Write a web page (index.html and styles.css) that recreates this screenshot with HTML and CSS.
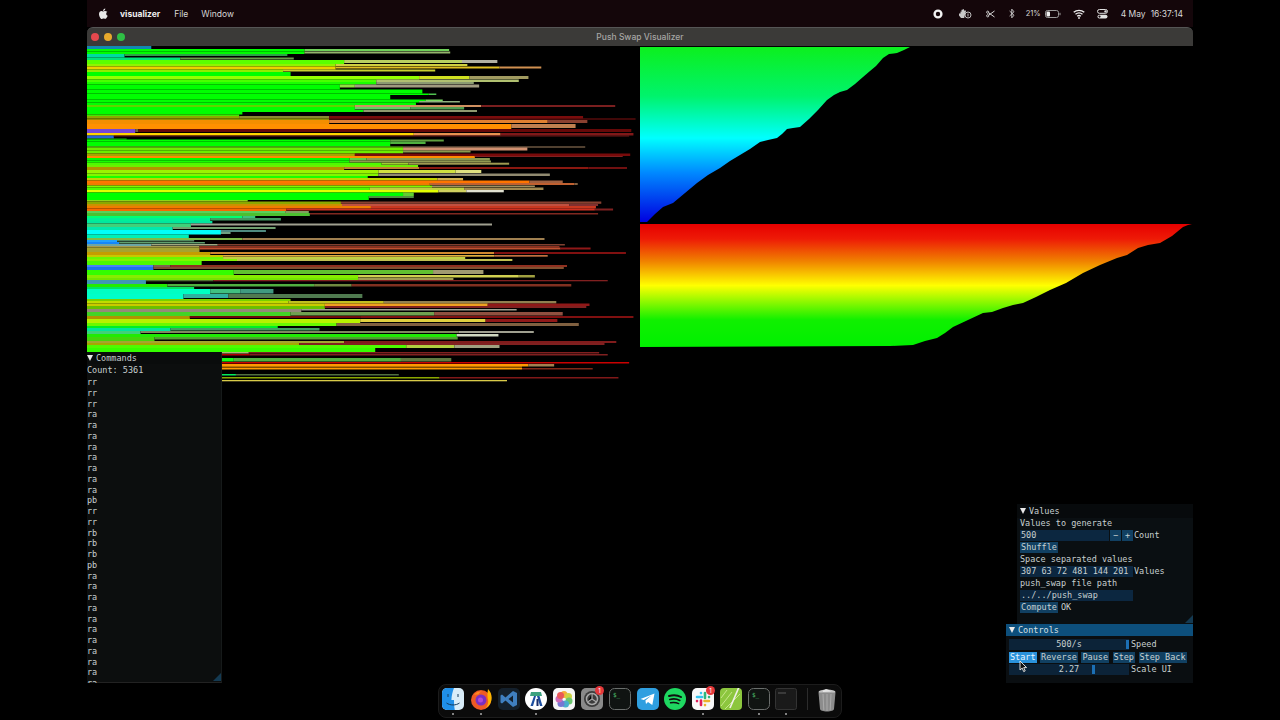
FILE: index.html
```html
<!DOCTYPE html>
<html lang="en">
<head>
  <meta charset="UTF-8">
  <title>Push Swap Visualizer</title>
  <link rel="stylesheet" href="styles.css">
</head>
<body>
  <div class="desktop">
    <header class="menubar">
      <svg class="apple" width="9" height="11" viewBox="0 0 18 22"><path fill="#e8e8e8" d="M12.6 1c.1 1.600-.5 2.800-1.300 3.700-.8 1-2 1.600-3.100 1.500-.2-1.400.5-2.800 1.200-3.600C10.200 1.700 11.500 1.100 12.600 1zM16.700 7.700c-1.500 1-2.300 2.200-2.300 3.800 0 1.900 1.100 3.300 3 4-.5 1.500-1.200 2.900-2.200 4.200-.9 1.200-1.800 2.300-3.100 2.300s-1.700-.8-3.300-.8c-1.500 0-2 .8-3.300.8-1.200 0-2.200-1.200-3.200-2.600C1.200 17.600 0 14.600 0 12.100c0-3.800 2.500-5.900 4.900-5.900 1.300 0 2.400.9 3.300.9.800 0 2-.9 3.500-.9 1.100 0 3.300.3 5 1.500z"/></svg>
      <span class="app-name">visualizer</span>
      <span class="menu-item">File</span>
      <span class="menu-item">Window</span>
      <div class="status">
        <svg class="st-record" width="10" height="10" viewBox="0 0 10 10"><circle cx="5" cy="5" r="3.400" fill="none" stroke="#f2f2f2" stroke-width="2.400"/></svg>
        <svg class="st-cloud" width="14" height="11" viewBox="0 0 14 11"><path fill="#c8c8c8" d="M1 5.500h1.500V3.500l1 .2V1.800l1 .2.300-1 1 .3.500 1.500 1.200-.6.500 1L7 6.500l-.8 3.500H3L1 7.500z"/><circle cx="10" cy="7" r="3" fill="#14060a" stroke="#d0d0d0" stroke-width=".9"/><path stroke="#d0d0d0" stroke-width=".9" d="M10 5.500v3"/></svg>
        <svg class="st-scissors" width="9" height="8" viewBox="0 0 9 8"><path fill="none" stroke="#d8d8d8" stroke-width="1" d="M8.500 1 2.600 5.200M8.500 7 2.600 2.800"/><circle cx="1.700" cy="2.200" r="1.100" fill="none" stroke="#d8d8d8" stroke-width=".9"/><circle cx="1.700" cy="5.800" r="1.100" fill="none" stroke="#d8d8d8" stroke-width=".9"/></svg>
        <svg class="st-bt" width="6" height="11" viewBox="0 0 6 11"><path fill="none" stroke="#d8d8d8" stroke-width=".9" d="M.6 3 5 7.300 2.800 9.800V1.200L5 3.700.6 8"/></svg>
        <span class="battery-pct">21%</span>
        <svg class="st-battery" width="16" height="8" viewBox="0 0 16 8"><rect x=".5" y=".5" width="13" height="7" rx="2" fill="none" stroke="#9a9a9a"/><rect x="1.500" y="1.500" width="3.500" height="5" rx="1" fill="#f0f0f0"/><rect x="14.500" y="2.800" width="1" height="2.400" fill="#9a9a9a"/></svg>
        <svg class="st-wifi" width="12" height="10" viewBox="0 0 12 10"><path fill="none" stroke="#f0f0f0" stroke-width="1.300" d="M.7 3.300c3-2.600 7.600-2.600 10.600 0M2.500 5.300c2-1.700 5-1.700 7 0M4.200 7.200c1-.8 2.600-.8 3.600 0"/><circle cx="6" cy="9" r=".9" fill="#f0f0f0"/></svg>
        <svg class="st-control" width="11" height="10" viewBox="0 0 11 10"><rect x=".5" y=".5" width="10" height="3.800" rx="1.900" fill="none" stroke="#e0e0e0"/><circle cx="8.500" cy="2.400" r="1.200" fill="#e0e0e0"/><rect x=".5" y="5.700" width="10" height="3.800" rx="1.900" fill="#e0e0e0"/><circle cx="2.500" cy="7.600" r="1.100" fill="#14060a"/></svg>
        <span class="clock">4 May</span>
        <span class="clock">16:37:14</span>
      </div>
    </header>

    <main class="window">
      <div class="titlebar">
        <span class="light light-red"></span>
        <span class="light light-yellow"></span>
        <span class="light light-green"></span>
        <span class="title">Push Swap Visualizer</span>
      </div>
      <div class="window-body">
        <canvas id="stackA" class="bars" width="553" height="337"></canvas>
        <svg class="sorted" width="553" height="302" viewBox="640 46 553 302">
          <defs>
            <linearGradient id="topGrad" x1="0" y1="47" x2="0" y2="222" gradientUnits="userSpaceOnUse">
              <stop offset="0" stop-color="#0cf01e"/>
              <stop offset=".28" stop-color="#00f36c"/>
              <stop offset=".52" stop-color="#00ffff"/>
              <stop offset=".72" stop-color="#0088ff"/>
              <stop offset="1" stop-color="#0000e0"/>
            </linearGradient>
            <linearGradient id="bottomGrad" x1="0" y1="224" x2="0" y2="347" gradientUnits="userSpaceOnUse">
              <stop offset="0" stop-color="#e60000"/>
              <stop offset=".12" stop-color="#ee1a06"/>
              <stop offset=".3" stop-color="#f08000"/>
              <stop offset=".5" stop-color="#ffff00"/>
              <stop offset=".78" stop-color="#10f000"/>
              <stop offset="1" stop-color="#00f000"/>
            </linearGradient>
          </defs>
          <polygon fill="url(#topGrad)" points="640,47 910,47 904,50 897,53 889,54 883,58 876,66 870,71 863,77 855,84 847,90 840,92 834,95 827,100 818,110 809,119 800,127 793,128 787,129 782,134 777,138 768,140 760,142 750,149 740,155 730,161 720,168 708,175 697,183 685,193 673,203 663,207 655,214 647,222 640,222"/>
          <polygon fill="url(#bottomGrad)" points="640,224 1192,224 1188,225 1183,227 1172,236 1160,243 1148,245 1138,248 1127,255 1117,258 1100,265 1083,273 1066,283 1050,290 1036,297 1023,303 1013,305 1003,308 992,312 983,313 968,320 953,327 945,333 937,338 925,341 913,345 890,346 640,347"/>
        </svg>

        <section class="panel panel-commands">
          <div class="panel-head"><span class="arrow"></span>Commands</div>
          <div class="command-list">
            <div class="command-count">Count: 5361</div>
            <div>rr</div><div>rr</div><div>rr</div>
            <div>ra</div><div>ra</div><div>ra</div><div>ra</div><div>ra</div><div>ra</div><div>ra</div><div>ra</div>
            <div>pb</div><div>rr</div><div>rr</div>
            <div>rb</div><div>rb</div><div>rb</div>
            <div>pb</div>
            <div>ra</div><div>ra</div><div>ra</div><div>ra</div><div>ra</div><div>ra</div><div>ra</div><div>ra</div><div>ra</div><div>ra</div><div>ra</div>
          </div>
          <span class="grip"></span>
        </section>

        <section class="panel panel-values">
          <div class="panel-head"><span class="arrow"></span>Values</div>
          <div class="panel-rows">
            <div class="row">Values to generate</div>
            <div class="row">
              <span class="field field-count">500</span>
              <span class="btn btn-step">−</span>
              <span class="btn btn-step">+</span>
              <span>Count</span>
            </div>
            <div class="row"><span class="btn btn-wide">Shuffle</span></div>
            <div class="row">Space separated values</div>
            <div class="row"><span class="field field-long">307 63 72 481 144 201</span><span>Values</span></div>
            <div class="row">push_swap file path</div>
            <div class="row"><span class="field field-long">../../push_swap</span></div>
            <div class="row"><span class="btn btn-wide">Compute</span><span>OK</span></div>
          </div>
          <span class="grip"></span>
        </section>

        <section class="panel panel-controls">
          <div class="panel-head panel-head-active"><span class="arrow"></span>Controls</div>
          <div class="panel-rows">
            <div class="row">
              <span class="slider">500/s<span class="grab" style="left: 117px"></span></span>
              <span>Speed</span>
            </div>
            <div class="row row-buttons">
              <span class="btn btn-active">Start</span>
              <span class="btn">Reverse</span>
              <span class="btn">Pause</span>
              <span class="btn">Step</span>
              <span class="btn">Step Back</span>
            </div>
            <div class="row">
              <span class="slider">2.27<span class="grab" style="left: 83px"></span></span>
              <span>Scale UI</span>
            </div>
          </div>
          <svg class="cursor" width="9" height="13" viewBox="0 0 9 13"><path fill="#111" stroke="#eee" stroke-width=".9" d="M1 1v9l2.200-1.900L4.700 11.600l1.500-.7-1.500-3.300h2.900z"/></svg>
        </section>
      </div>
    </main>

    <footer class="dock">
      <div class="dock-item is-open">
        <svg width="22" height="22" viewBox="0 0 22 22"><rect width="22" height="22" rx="5" fill="#d8ecf8"/><path fill="#1f8fe8" d="M5 0h7c-1.500 3.500-2.400 7.500-2.600 12H12c0 3.500.2 6.500.8 10H5a5 5 0 0 1-5-5V5a5 5 0 0 1 5-5z"/><path fill="none" stroke="#123a5c" stroke-width="1" d="M6 6v3M16 6v3M4.500 15c3.500 2.600 9.500 2.600 13 0"/></svg>
      </div>
      <div class="dock-item is-open">
        <svg width="22" height="22" viewBox="0 0 22 22"><circle cx="11" cy="12" r="10" fill="#ee5a24"/><path fill="#ffb400" d="M18 1c3 3 4.200 7 3.500 11-.6 4-3.200 7-6.500 8.500 3-2.600 3.800-6 2.800-9.500-.5-2.200-.5-6 .2-10z"/><circle cx="11" cy="12" r="5.500" fill="#7a2fc0"/><circle cx="10.500" cy="12" r="2.500" fill="#b04ad8"/><path fill="#ff8a1f" d="M4 7c2-3 5-4 8-3.500-2 .5-3 1.500-3.500 3C7 6.500 5.500 6.500 4 7z"/></svg>
      </div>
      <div class="dock-item">
        <svg width="22" height="22" viewBox="0 0 22 22"><rect width="22" height="22" rx="5" fill="#14202c"/><path fill="#3f7fc0" d="m15 3 4 2v12l-4 2-7.500-6.500L4 15.500l-1.500-1v-7L4 6.500l3.500 3zM15 7.500 10.500 11l4.500 3.500z"/></svg>
      </div>
      <div class="dock-item is-open">
        <svg width="22" height="22" viewBox="0 0 22 22"><circle cx="11" cy="11" r="11" fill="#fff"/><path fill="#3ca27f" d="M6 4h10l1 4H5z"/><path fill="#1d4fa0" d="M9 8h2l-3 10H5.500zM12 8h2.500l3 10H15z"/><rect x="11.500" y="11" width="2" height="7" fill="#1b2f6b"/></svg>
      </div>
      <div class="dock-item">
        <svg width="22" height="22" viewBox="0 0 22 22"><rect width="22" height="22" rx="5" fill="#f6f6f6"/><g opacity=".9"><circle cx="11" cy="6.500" r="3.500" fill="#f6a623"/><circle cx="15.500" cy="8.500" r="3.500" fill="#c8d030"/><circle cx="16" cy="13" r="3.500" fill="#5cc060"/><circle cx="12.500" cy="16" r="3.500" fill="#38a8c8"/><circle cx="8" cy="15.500" r="3.500" fill="#6a6ad0"/><circle cx="6" cy="11" r="3.500" fill="#c85ab0"/><circle cx="7.500" cy="7.500" r="3.500" fill="#e84848"/></g></svg>
      </div>
      <div class="dock-item">
        <svg width="22" height="22" viewBox="0 0 22 22"><rect width="22" height="22" rx="5" fill="#8a8a8a"/><circle cx="11" cy="11" r="8" fill="#3c3c3c"/><circle cx="11" cy="11" r="5.500" fill="none" stroke="#a8a8a8" stroke-width="1.500"/><path stroke="#a8a8a8" stroke-width="1.200" d="M11 5.500V11l-4.500 3M11 11l4.500 3"/></svg>
        <span class="badge">1</span>
      </div>
      <div class="dock-item">
        <svg width="22" height="22" viewBox="0 0 22 22"><rect x=".5" y=".5" width="21" height="21" rx="5" fill="#101412" stroke="#6a6e6c"/><text x="4" y="9" class="term-prompt">$_</text></svg>
      </div>
      <div class="dock-item">
        <svg width="22" height="22" viewBox="0 0 22 22"><rect width="22" height="22" rx="5" fill="#2f9fe0"/><path fill="#fff" d="m3.500 11 14-5.500-2.200 11.500-4.300-3-2 2-.6-3.400 6-5-7.600 4.500z"/></svg>
      </div>
      <div class="dock-item">
        <svg width="22" height="22" viewBox="0 0 22 22"><circle cx="11" cy="11" r="11" fill="#1ed760"/><path fill="none" stroke="#101010" stroke-linecap="round" stroke-width="2" d="M5 8c4-1.200 8.500-1 12 1"/><path fill="none" stroke="#101010" stroke-linecap="round" stroke-width="1.700" d="M5.800 11.500c3.500-1 7-.7 10 .9"/><path fill="none" stroke="#101010" stroke-linecap="round" stroke-width="1.400" d="M6.500 14.800c3-.7 5.500-.5 8.200.8"/></svg>
      </div>
      <div class="dock-item is-open">
        <svg width="22" height="22" viewBox="0 0 22 22"><rect width="22" height="22" rx="5" fill="#f8f8f8"/><g stroke-width="2.600" stroke-linecap="round"><path stroke="#36c5f0" d="M5 9h5"/><path stroke="#2eb67d" d="M13 5v5"/><path stroke="#ecb22e" d="M12.500 13H17"/><path stroke="#e01e5a" d="M9 12.500V17"/><path stroke="#36c5f0" d="M9 5v.1"/><path stroke="#2eb67d" d="M17 9v.1"/><path stroke="#ecb22e" d="M13 17v.1"/><path stroke="#e01e5a" d="M5 13v.1"/></g></svg>
        <span class="badge">1</span>
      </div>
      <div class="dock-item">
        <svg width="22" height="22" viewBox="0 0 22 22"><rect width="22" height="22" rx="4" fill="#8cc63e"/><path stroke="#c8e88a" stroke-width="1" d="M1 18 12 4M5 21 20 6M1 10l6-8"/><path fill="none" stroke="#f0f0e8" stroke-width="1.600" d="M10 20 19 -1"/></svg>
      </div>
      <div class="dock-item is-open">
        <svg width="22" height="22" viewBox="0 0 22 22"><rect x=".5" y=".5" width="21" height="21" rx="5" fill="#101412" stroke="#6a6e6c"/><text x="4" y="9" class="term-prompt">$_</text></svg>
      </div>
      <div class="dock-item is-open">
        <svg width="22" height="22" viewBox="0 0 22 22"><rect x=".5" y=".5" width="21" height="21" rx="2" fill="#1a1a1a" stroke="#333"/><path stroke="#5a5a5a" stroke-width="1" d="M3 5h8"/></svg>
      </div>
      <span class="dock-sep"></span>
      <div class="dock-item">
        <svg width="22" height="24" viewBox="0 0 22 24"><ellipse cx="11" cy="4" rx="8.500" ry="2.500" fill="#c4c4c4"/><path fill="#8c8c8c" d="M2.500 4.500h17L18 21c-.2 1.500-3 2.500-7 2.500S4.200 22.500 4 21z"/><path stroke="#b8b8b8" stroke-width=".7" d="M7 6l.8 16M11 6v17M15 6l-.8 16"/><path fill="#e4e4e4" d="M7 2.500l3-1.500 3 1 2 1.500-8 .5z"/></svg>
      </div>
    </footer>
  </div>
  <script src="chart.js"></script>
</body>
</html>
```

FILE: styles.css
```css
body {
  margin: 0;
  background: #000;
  color: #d0d4d4;
  font-family: "Inter", "Liberation Sans", sans-serif;
  overflow: hidden;
}

.desktop {
  width: 1106px;
  height: 720px;
  margin: 0 auto;
  display: flex;
  flex-direction: column;
}

/* menu bar */
.menubar {
  height: 27px;
  flex: none;
  background: #14060a;
  display: flex;
  align-items: center;
  padding-left: 12px;
  font-size: 8.500px;
  color: #d8d8d8;
}

.apple {
  margin-right: 12px;
  margin-top: -1px;
}

.app-name {
  font-weight: 700;
  margin-right: 14px;
  color: #eee;
}

.menu-item {
  margin-right: 13px;
}

.status {
  margin-left: auto;
  padding-right: 10px;
  display: flex;
  align-items: center;
}

.st-record { margin-right: 15px; }
.st-cloud { margin-right: 14px; }
.st-scissors { margin-right: 14px; }
.st-bt { margin-right: 11px; }
.battery-pct { margin-right: 4px; font-size: 7.500px; }
.st-battery { margin-right: 12px; }
.st-wifi { margin-right: 12px; }
.st-control { margin-right: 8px; }
.clock { margin-left: 5px; font-size: 8.500px; }

/* window */
.window {
  height: 656px;
  flex: none;
  display: flex;
  flex-direction: column;
}

.titlebar {
  height: 19px;
  flex: none;
  background: #3b3a38;
  border-top: 1px solid #555;
  box-sizing: border-box;
  border-radius: 6px 6px 0 0;
  display: flex;
  align-items: center;
  gap: 5px;
  padding-left: 4px;
  position: relative;
}

.light {
  width: 8px;
  height: 8px;
  border-radius: 50%;
}

.light-red { background: #e5484d; }
.light-yellow { background: #e8a92c; }
.light-green { background: #2fbf45; }

.title {
  position: absolute;
  left: 0;
  right: 0;
  text-align: center;
  font-size: 8.500px;
  font-weight: 500;
  color: #a6a6a4;
}

.window-body {
  flex: 1;
  position: relative;
  background: #000;
  display: grid;
  grid-template-columns: 553px 553px;
  align-items: start;
}

.bars {
  display: block;
  filter: blur(0.35px);
}

.sorted {
  display: block;
  filter: blur(0.3px);
}

/* imgui panels */
.panel {
  position: absolute;
  box-sizing: border-box;
  font-family: "DejaVu Sans Mono", monospace;
  font-size: 8.500px;
  color: #c8d0d0;
  line-height: 11px;
  white-space: nowrap;
}

.panel-commands {
  left: 0;
  top: 306px;
  width: 135px;
  height: 331px;
  background: #0c0e0e;
  border-bottom: 1px solid #222;
  border-right: 1px solid #161a1a;
}

.panel-values {
  right: 0;
  top: 458px;
  width: 176px;
  height: 120px;
  background: #0a0f12;
}

.panel-controls {
  right: 0;
  top: 578px;
  width: 187px;
  height: 59px;
  background: #0a0e11;
}

.panel-head {
  height: 14px;
  display: flex;
  align-items: center;
  gap: 3px;
  padding-left: 3px;
  background: #070a0c;
}

.panel-commands .panel-head {
  height: 12px;
  padding-left: 0;
  background: #0a0c0c;
}

.panel-head-active {
  height: 12px;
  background: #0d4f7c;
  color: #d8e0e4;
}

.arrow {
  width: 0;
  height: 0;
  border-left: 3.500px solid transparent;
  border-right: 3.500px solid transparent;
  border-top: 6px solid #e8e8e8;
}

.command-list {
  height: 318px;
  overflow: hidden;
  padding-top: 1px;
}

.command-list div {
  height: 10.750px;
  line-height: 10.750px;
}

.command-list .command-count {
  height: 12px;
}

.panel-rows {
  display: flex;
  flex-direction: column;
  gap: 1px;
  padding: 0 3px;
}

.panel-controls .panel-rows {
  padding-top: 3px;
  gap: 1.500px;
}

.row {
  height: 11px;
  display: flex;
  align-items: center;
  gap: 1px;
}

.row-buttons {
  gap: 3.500px;
}

.field {
  height: 11px;
  background: #0c2740;
  padding-left: 1px;
  box-sizing: border-box;
}

.field-count { width: 89px; }
.field-long { width: 113px; }

.btn {
  height: 11px;
  padding: 0 1px;
  background: #114062;
  text-align: center;
}

.btn-step { width: 11px; padding: 0; box-sizing: border-box; }
.btn-wide { width: 38px; padding: 0; margin-right: 2px; }
.btn-active { background: #2a92dc; color: #e8f4fc; }

.slider {
  width: 120px;
  height: 11px;
  margin-right: 1px;
  background: #0c2338;
  text-align: center;
  position: relative;
}

.grab {
  position: absolute;
  top: 1px;
  width: 3px;
  height: 9px;
  background: #1c6fb4;
}

.grip {
  position: absolute;
  right: 0;
  bottom: 1px;
  width: 0;
  height: 0;
  border-left: 8px solid transparent;
  border-bottom: 8px solid #143a52;
}

.cursor {
  position: absolute;
  left: 13px;
  top: 36px;
}

/* dock */
.dock {
  margin: 1px auto 0;
  height: 34px;
  box-sizing: border-box;
  padding: 3px 3px 0;
  display: flex;
  gap: 5.800px;
  align-items: flex-start;
  background: #0b0b0b;
  border: 1px solid #1c1c1c;
  border-radius: 8px;
}

.dock-item {
  width: 22px;
  height: 26px;
  flex: none;
  position: relative;
}

.dock-item svg {
  display: block;
}

.is-open::after {
  content: "";
  position: absolute;
  left: 10px;
  bottom: -1px;
  width: 2px;
  height: 2px;
  border-radius: 50%;
  background: #aaa;
}

.dock-sep {
  width: 1px;
  height: 22px;
  background: #2c2c2c;
  margin: 0 2px 0 4px;
}

.badge {
  position: absolute;
  right: -1px;
  top: -2px;
  width: 9px;
  height: 9px;
  border-radius: 50%;
  background: #e5383b;
  color: #fff;
  font-size: 6px;
  line-height: 9px;
  text-align: center;
}

.term-prompt {
  font-family: "DejaVu Sans Mono", monospace;
  font-size: 6px;
  fill: #4fc46a;
}
```

FILE: chart.js
```js
// stack A bars: [y, height, [[end, colour], ...]], drawn from the left edge
const bands = [
  [0, 1.5, [[60, '#3d7f96']]],
  [3, 2, [[203, '#35dd45'], [338, '#6fd05a']]],
  [5.5, 2, [[203, '#30d848'], [339, '#93b46c']]],
  [8, 2, [[35, '#2fbfa0'], [187, '#2fa04a']]],
  [11.5, 2, [[87, '#35c58c'], [193, '#6a9a4a']]],
  [14, 3, [[240, '#8be82a'], [350, '#b8d060'], [383, '#b0b0a0']]],
  [18, 2, [[232, '#a8e020'], [355, '#d0d040']]],
  [20.5, 2, [[232, '#d8c810'], [385, '#e0c020'], [424, '#d09050']]],
  [23.5, 2, [[183, '#a8d820'], [325, '#c8d030']]],
  [26, 3.5, [[190, '#30e040']]],
  [30, 3, [[310, '#b0f020'], [357, '#d0e020'], [412, '#a09a60']]],
  [33.5, 2.5, [[270, '#80e820'], [403, '#b0c070']]],
  [36, 2, [[270, '#60e020'], [361, '#8a9a70']]],
  [38.5, 3, [[236, '#50e020'], [250, '#90e040'], [366, '#a09a80']]],
  [43.5, 4, [[313, '#12e818']]],
  [47.5, 1.5, [[319, '#30e030'], [326, '#50c050']]],
  [49, 3, [[283, '#12e818']]],
  [53.5, 2, [[316, '#30e028'], [332, '#7ad860']]],
  [55, 1.5, [[310, '#30e028'], [348, '#90b080']]],
  [56.5, 2, [[307, '#30e028']]],
  [59, 2, [[250, '#80c030'], [368, '#d09060'], [493, '#7a1f1f']]],
  [61, 2.5, [[250, '#28e020'], [302, '#60d060'], [352, '#50a050']]],
  [64, 2, [[258, '#28e020'], [364, '#909a70']]],
  [66, 2, [[145, '#28e020']]],
  [68.5, 1, [[142, '#70d020']]],
  [70, 2.5, [[142, '#90a030'], [226, '#8a8a30'], [463, '#7a0c0c']]],
  [72.5, 1, [[226, '#8a8a30'], [512, '#801010']]],
  [74, 3, [[226, '#c89010'], [430, '#e08030'], [467, '#8a4030']]],
  [78, 4, [[396, '#f09818'], [456, '#c08050']]],
  [83, 3, [[45, '#6a50a0'], [48, '#70603a'], [508, '#650808']]],
  [87, 2.5, [[305, '#e8d040'], [386, '#e89050'], [510, '#801818']]],
  [89.5, 1, [[25, '#4060a0'], [506, '#701818']]],
  [92.5, 1, [[37, '#50a040']]],
  [93.5, 2, [[283, '#18e030'], [333, '#60a040']]],
  [95.5, 2.500, [[283, '#18e030'], [316, '#50b040']]],
  [100.5, 1, [[295, '#90c060'], [465, '#a08060']]],
  [101.5, 3, [[295, '#90d830'], [411, '#d09070']]],
  [104.5, 2, [[295, '#90d830'], [358, '#8a9a50']]],
  [107.5, 2.500, [[250, '#a0a030'], [507, '#780a0a']]],
  [110, 1, [[362, '#d09020'], [500, '#802020']]],
  [112, 2.500, [[245, '#50e020'], [261, '#60d040'], [376, '#8a9a50']]],
  [114.5, 2, [[245, '#60e828'], [377, '#909a50']]],
  [116.7, 2, [[275, '#80e020'], [300, '#a0d030'], [394, '#a09a50']]],
  [119, 2, [[309, '#90d828']]],
  [121, 2, [[240, '#a09020'], [310, '#c08030'], [468, '#8a1810'], [504, '#701010']]],
  [124, 3, [[272, '#b0e020'], [344, '#d0e040'], [368, '#e0e080']]],
  [127.5, 2.500, [[272, '#a0e020'], [432, '#908a70']]],
  [130, 2, [[262, '#60e020']]],
  [132, 2.500, [[327, '#c0c828'], [351, '#d0b050']]],
  [134.5, 2.500, [[413, '#e08020'], [444, '#a06040']]],
  [137, 2, [[320, '#c08020'], [455, '#c06030'], [458, '#806040']]],
  [139.5, 1.500, [[322, '#a0e028'], [418, '#a09060']]],
  [141.5, 2.500, [[264, '#80e020'], [352, '#c0d040'], [426, '#a08850']]],
  [144, 2.300, [[328, '#e0f020'], [354, '#d0d060'], [389, '#e0e0d0']]],
  [146.5, 3.500, [[295, '#20e010'], [305, '#60d030']]],
  [150, 2, [[263, '#30e020'], [305, '#509040']]],
  [154, 1.300, [[150, '#a0c860']]],
  [155.5, 2.300, [[237, '#90a040'], [480, '#884030']]],
  [158, 2, [[238, '#b09020'], [450, '#c05040'], [477, '#803030']]],
  [160, 2.500, [[265, '#c08010'], [475, '#c83820']]],
  [162.5, 2, [[186, '#c07010'], [474, '#d03020'], [491, '#802020']]],
  [165, 2, [[185, '#80c080'], [207, '#80a060']]],
  [167, 1.500, [[208, '#70b060'], [477, '#802820']]],
  [170, 2, [[145, '#30e090'], [157, '#40c080']]],
  [172, 2.500, [[115, '#30d0a0'], [181, '#409a60']]],
  [175, 2, [[117, '#20c8a0']]],
  [177.5, 2, [[97, '#70c090'], [378, '#a0a090']]],
  [181, 2, [[80, '#50d0b0'], [176, '#70a070']]],
  [184, 2, [[125, '#18f0e0'], [167, '#508a80']]],
  [186, 2, [[125, '#18f0e0'], [134, '#70a080']]],
  [188.5, 2.500, [[95, '#20d0b0']]],
  [192, 2, [[145, '#90b070'], [427, '#a08050']]],
  [194, 1.500, [[28, '#5098d0'], [100, '#508a60']]],
  [196, 1.500, [[30, '#4080c0'], [110, '#60a070']]],
  [198, 1.500, [[60, '#80a0a0'], [122, '#a0a880'], [446, '#804030']]],
  [200, 1.500, [[105, '#a09a70'], [441, '#903020']]],
  [201.5, 2, [[105, '#a0a060'], [442, '#c05030'], [470, '#901818']]],
  [206, 2, [[115, '#b09a20'], [380, '#d08830'], [503, '#801010']]],
  [209, 1.700, [[127, '#c0c030'], [380, '#e0b040'], [430, '#c07040']]],
  [211, 2, [[127, '#90e030'], [353, '#c0d040']]],
  [213, 2, [[140, '#a0e040'], [397, '#c0c050']]],
  [215, 2, [[107, '#80e040']]],
  [219, 2, [[62, '#6080c0'], [78, '#806050'], [448, '#903020']]],
  [221, 2, [[62, '#4070b0'], [445, '#805030']]],
  [224, 4, [[137, '#70e030'], [323, '#60c030'], [370, '#a09a70']]],
  [229, 2.500, [[253, '#a0d820'], [403, '#d0d050'], [418, '#a0a040']]],
  [232, 2, [[253, '#90d020'], [342, '#a09a50']]],
  [234, 1.300, [[55, '#6090a0'], [118, '#507030'], [486, '#802020']]],
  [238, 2.500, [[75, '#60d030'], [212, '#50b040'], [247, '#708a40'], [452, '#803020']]],
  [241, 2, [[100, '#30c880']]],
  [243, 4.500, [[115, '#10f0c0'], [143, '#40c080'], [174, '#409a80']]],
  [248, 4, [[90, '#20e0c0'], [132, '#30b0a0'], [257, '#507a50']]],
  [253, 2, [[190, '#90c030']]],
  [255, 2.500, [[188, '#c0d020'], [277, '#c0c020'], [438, '#908050']]],
  [257.500, 2.500, [[222, '#c0c010'], [374, '#f0a020'], [469, '#901818']]],
  [260, 2, [[222, '#80b020'], [466, '#802020']]],
  [263, 1.500, [[200, '#908a80'], [401, '#a0a090']]],
  [266, 3.500, [[190, '#70c060'], [324, '#70a050'], [444, '#905040']]],
  [270, 2, [[96, '#a09030'], [255, '#700a0a'], [510, '#801010']]],
  [273, 3, [[255, '#c0e020'], [372, '#e0d040'], [439, '#901818']]],
  [277, 3, [[233, '#90e020'], [459, '#806040']]],
  [280, 2, [[178, '#40d060']]],
  [282, 2.500, [[78, '#30c8a0'], [217, '#40a060']]],
  [285, 2, [[50, '#70c090'], [347, '#808a60'], [417, '#a0a090']]],
  [288, 2.500, [[345, '#60d050'], [384, '#d0d8c0']]],
  [291, 2.500, [[63, '#70c050'], [346, '#50a030']]],
  [295, 2, [[240, '#a0a060'], [494, '#801c1c']]],
  [297, 2, [[198, '#a0a040'], [483, '#802020']]],
  [299, 3, [[298, '#80e028'], [343, '#b0d040'], [385, '#a0a080']]],
  [302, 4, [[269, '#70e020']]],
  [306, 1.500, [[151, '#b0b090'], [478, '#802020']]],
  [308, 1.500, [[152, '#700a0a'], [486, '#802020']]],
  [312, 3.500, [[137, '#60e060'], [293, '#50b040'], [340, '#607a40']]],
  [316, 1.500, [[506, '#800a0a']]],
  [318, 2.500, [[412, '#f0a020'], [436, '#a08050']]],
  [320.500, 1, [[406, '#f0a020']]],
  [322, 1.500, [[406, '#f0a020'], [472, '#802818']]],
  [328, 1.500, [[139, '#50d080'], [291, '#507040']]],
  [331, 1.500, [[329, '#90a040'], [496, '#801818']]],
  [334, 1.300, [[392, '#d0c880']]],
];

// band ends were read off a crop at 2.8x, stored at 3x
const X_SCALE = 3 / 2.8;

const ctx = document.getElementById('stackA').getContext('2d');

bands.forEach((band, i) => {
  const [y, h, segments] = band;
  const next = bands[i + 1];
  let x = 0;
  segments.forEach(([end, colour], s) => {
    // first segment runs down to the next band so the left side stays solid
    const fill = s === 0 && next && y < 306 ? next[0] - y : h;
    // the solid part of the chart is much more vivid than the thin ends
    ctx.filter = s === 0 ? 'saturate(1.8)' : 'none';
    ctx.fillStyle = colour;
    ctx.fillRect(x * X_SCALE, y, (end - x) * X_SCALE, fill);
    x = end;
  });
});
```
